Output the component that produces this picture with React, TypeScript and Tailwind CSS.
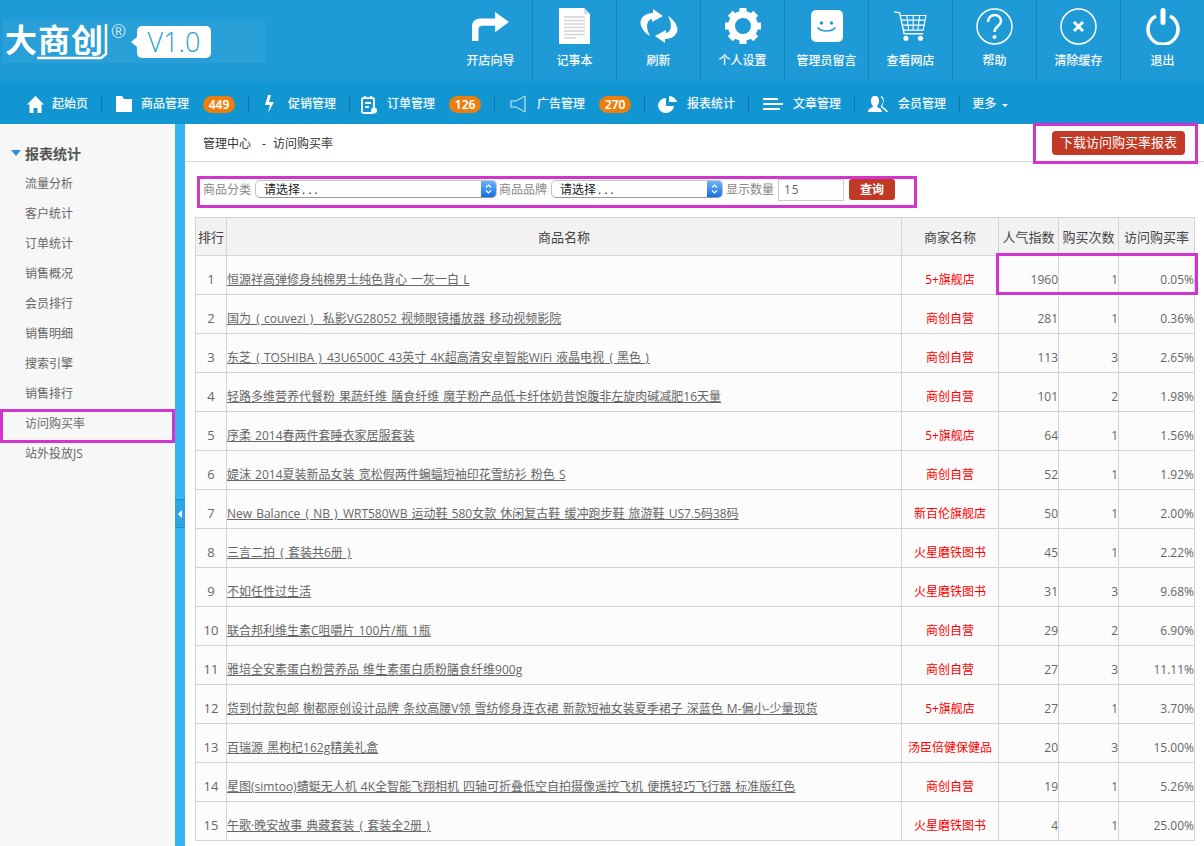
const rows = [
  ['恒源祥高弹修身纯棉男士纯色背心 一灰一白 L', '5+旗舰店', 1960, 1, '0.05%'],
  ['国为 \u200a( couvezi )\u200a \u00a0私影VG28052 视频眼镜播放器 移动视频影院', '商创自营', 281, 1, '0.36%'],
  ['东芝 \u200a( TOSHIBA )\u200a 43U6500C 43英寸 4K超高清安卓智能WiFi 液晶电视 \u200a( 黑色 )\u200a', '商创自营', 113, 3, '2.65%'],
  ['轻路多维营养代餐粉 果蔬纤维 膳食纤维 魔芋粉产品低卡纤体奶昔饱腹非左旋肉碱减肥16天量', '商创自营', 101, 2, '1.98%'],
  ['序柔 2014春两件套睡衣家居服套装', '5+旗舰店', 64, 1, '1.56%'],
  ['媞沫 2014夏装新品女装 宽松假两件蝙蝠短袖印花雪纺衫 粉色 S', '商创自营', 52, 1, '1.92%'],
  ['New Balance \u200a( NB )\u200a WRT580WB 运动鞋 580女款 休闲复古鞋 缓冲跑步鞋 旅游鞋 US7.5码38码', '新百伦旗舰店', 50, 1, '2.00%'],
  ['三言二拍 \u200a( 套装共6册 )\u200a', '火星磨铁图书', 45, 1, '2.22%'],
  ['不如任性过生活', '火星磨铁图书', 31, 3, '9.68%'],
  ['联合邦利维生素C咀嚼片 100片/瓶 1瓶', '商创自营', 29, 2, '6.90%'],
  ['雅培全安素蛋白粉营养品 维生素蛋白质粉膳食纤维900g', '商创自营', 27, 3, '11.11%'],
  ['货到付款包邮 榭都原创设计品牌 条纹高腰V领 雪纺修身连衣裙 新款短袖女装夏季裙子 深蓝色 M-偏小-少量现货', '5+旗舰店', 27, 1, '3.70%'],
  ['百瑞源 黑枸杞162g精美礼盒', '汤臣倍健保健品', 20, 3, '15.00%'],
  ['星图(simtoo)蜻蜓无人机 4K全智能飞翔相机 四轴可折叠低空自拍摄像遥控飞机 便携轻巧飞行器 标准版红色', '商创自营', 19, 1, '5.26%'],
  ['午歌·晚安故事 典藏套装 \u200a( 套装全2册 )\u200a', '火星磨铁图书', 4, 1, '25.00%'],
];

const sideItems = ['流量分析', '客户统计', '订单统计', '销售概况', '会员排行', '销售明细', '搜索引擎', '销售排行', '访问购买率', '站外投放JS'];

const refreshArrow = 'M13 2L23 9L12 15V12C7 13 5 20 10 29C3 25-1 17 1 13C3 8 8 6 13 6Z';

const tiles = [
  {
    label: '开店向导',
    icon: (
      <svg width="37" height="29" viewBox="0 0 40 36" fill="#fff" preserveAspectRatio="none">
        <path d="M0 36V18C0 11 4 8 10 8h15V0l15 12.5L25 25v-8H12c-3 0-5 1-5 5v14z" />
      </svg>
    ),
  },
  {
    label: '记事本',
    icon: (
      <svg width="31" height="36" viewBox="0 0 31 36">
        <path d="M0 0h25l6 6v30H0z" fill="#fff" />
        <path d="M25 0l6 6h-6z" fill="#cfe0ea" />
        <path d="M5 9h21M5 12.5h21M5 16h21M5 19.5h21M5 23h21M5 26.5h21M5 30h12" stroke="#d4d4d4" strokeWidth="1.5" />
      </svg>
    ),
  },
  {
    label: '刷新',
    icon: (
      <svg width="38" height="38" viewBox="0 0 38 38" fill="#fff">
        <path d={refreshArrow} />
        <path d={refreshArrow} transform="rotate(180 19 19)" />
      </svg>
    ),
  },
  {
    label: '个人设置',
    icon: (
      <svg width="36" height="36" viewBox="0 0 36 36" fill="#fff">
        <circle cx="18" cy="18" r="11.5" fill="none" stroke="#fff" strokeWidth="7" />
        {[0, 45, 90, 135, 180, 225, 270, 315].map((a) => (
          <rect key={a} x="14.5" y="0" width="7" height="7" transform={`rotate(${a} 18 18)`} />
        ))}
      </svg>
    ),
  },
  {
    label: '管理员留言',
    icon: (
      <svg width="32" height="32" viewBox="0 0 32 32">
        <rect width="32" height="32" rx="5" fill="#fff" />
        <circle cx="10.5" cy="13" r="1.7" fill="#1e9ad6" />
        <circle cx="20.5" cy="13" r="1.7" fill="#1e9ad6" />
        <path d="M7 18c4 4 13 4 17 0" fill="none" stroke="#1e9ad6" strokeWidth="1.7" strokeLinecap="round" />
      </svg>
    ),
  },
  {
    label: '查看网店',
    icon: (
      <svg width="33" height="30" viewBox="0 0 36 33" fill="none" stroke="#fff">
        <path d="M0 1l6 1 5 23h21" strokeWidth="1.5" />
        <path d="M7 5h28l-3 16H10M14 5l2 16M21 5v16M28 5l-2 16M8 10h26M9 15.5h24" strokeWidth="1.2" />
        <circle cx="13" cy="30" r="2.8" fill="#fff" stroke="none" />
        <circle cx="29" cy="30" r="2.8" fill="#fff" stroke="none" />
      </svg>
    ),
  },
  {
    label: '帮助',
    icon: (
      <svg width="37" height="37" viewBox="0 0 37 37" fill="none" stroke="#fff">
        <circle cx="18.5" cy="18.5" r="17.5" strokeWidth="1.5" />
        <path d="M12 14c0-4 3-7 6.5-7s6.5 2.5 6.5 6c0 5-6.5 5-6.5 11" strokeWidth="2.5" />
        <circle cx="18.5" cy="29" r="2" fill="#fff" stroke="none" />
      </svg>
    ),
  },
  {
    label: '清除缓存',
    icon: (
      <svg width="37" height="37" viewBox="0 0 37 37" fill="none" stroke="#fff">
        <circle cx="18.5" cy="18.5" r="17.5" strokeWidth="1.5" />
        <path d="M14 14l9 9M23 14l-9 9" strokeWidth="3" />
      </svg>
    ),
  },
  {
    label: '退出',
    icon: (
      <svg width="34" height="37" viewBox="0 0 34 37" fill="none" stroke="#fff" strokeWidth="3.5">
        <path d="M10 8a15 15 0 1 0 14 0" />
        <path d="M17 2.5v12" strokeWidth="5" strokeLinecap="round" />
      </svg>
    ),
  },
];

const navItems = [
  {
    label: '起始页',
    cls: 'pl-0',
    box: 'w-[25px]',
    icon: (
      <svg width="17" height="17" viewBox="0 0 17 17" fill="#fff">
        <path d="M8.5 0L17 8.5h-2.5V17h-4v-5h-4v5h-4V8.5H0z" />
      </svg>
    ),
  },
  {
    label: '商品管理',
    badge: 449,
    cls: 'pl-[14px]',
    box: 'w-[25px]',
    icon: (
      <svg width="16" height="16" viewBox="0 0 16 16" fill="#fff">
        <path d="M0 0h6l2 3h8v13H0z" />
      </svg>
    ),
  },
  {
    label: '促销管理',
    cls: 'pl-[14px]',
    box: 'w-[25px]',
    icon: (
      <svg width="13" height="18" viewBox="0 0 13 18" fill="#fff">
        <path d="M5 0h3L6 7h5L5 18l2-8H2z" />
      </svg>
    ),
  },
  {
    label: '订单管理',
    badge: 126,
    cls: 'pl-[11px]',
    box: 'w-[26px]',
    icon: (
      <svg width="16" height="19" viewBox="0 0 16 19" fill="none" stroke="#fff" strokeWidth="1.8">
        <rect x="1" y="3" width="12" height="15" rx="1.5" />
        <path d="M4 1v3M10 1v3M4 8h6M4 12h4" />
        <circle cx="13" cy="15.5" r="3" fill="#fff" stroke="none" />
      </svg>
    ),
  },
  {
    label: '广告管理',
    badge: 270,
    cls: 'pl-[15px]',
    box: 'w-[27px]',
    icon: (
      <svg width="16" height="18" viewBox="0 0 16 18" fill="none" stroke="#d8f0fb" strokeWidth="1">
        <path d="M1 6h5l9-5v16l-9-5H1z" />
      </svg>
    ),
  },
  {
    label: '报表统计',
    cls: 'pl-[12px]',
    box: 'w-[30px]',
    icon: (
      <svg width="20" height="17" viewBox="0 0 20 17" fill="#fff">
        <path d="M9 2a8 7.5 0 1 0 8 8H9z" />
        <path d="M12 0c4 0 7 3 8 6h-8z" />
      </svg>
    ),
  },
  {
    label: '文章管理',
    cls: 'pl-[14px]',
    box: 'w-[30px]',
    icon: (
      <svg width="20" height="12" viewBox="0 0 20 12" fill="#fff">
        <path d="M0 0h15v2H0zM0 5h20v2H0zM0 10h17v2H0z" />
      </svg>
    ),
  },
  {
    label: '会员管理',
    cls: 'pl-[13px]',
    box: 'w-[30px]',
    icon: (
      <svg width="20" height="18" viewBox="0 0 20 18" fill="#fff">
        <path d="M7 1c3 0 4 2 4 5 0 2-1 4-2 5 0 2 5 2 5 6H0c0-4 5-4 5-6-1-1-2-3-2-5 0-3 1-5 4-5z" />
        <path d="M13 1c3 1 3 4 2.5 6-.5 2-1 3-1 4 0 2 4 2 5.5 6h-2c-1-3-5-3-5-6 1-2 2-3 2-5s-1-3-2.5-4c.5-.5 1-1 3-1z" />
      </svg>
    ),
  },
];

function FakeSelect({ className }: { className: string }) {
  return (
    <div className={`${className} h-[18px] flex bg-white rounded-[5px] border border-[#c4c4c4] border-b-[#999] overflow-hidden`}>
      <span className="flex-1 pl-2 text-[12px] leading-[17px] text-[#222]">
        请选择<span className="tracking-[3px] ml-[2px]">...</span>
      </span>
      <span className="w-[15px] flex items-center justify-center bg-gradient-to-b from-[#6cb3fa] to-[#0f6fe8]">
        <svg width="7" height="12" viewBox="0 0 7 12" fill="none" stroke="#fff" strokeWidth="1.2">
          <path d="M1 4.5L3.5 2 6 4.5M1 7.5L3.5 10 6 7.5" />
        </svg>
      </span>
    </div>
  );
}

export default function App() {
  return (
    <div className="font-['Open_Sans','Noto_Sans_CJK_SC',sans-serif] relative w-[1204px] h-[846px] overflow-hidden bg-white text-[12px]">
      <header className="h-[81px] bg-[#1e9ad6] flex justify-between">
        <div className="pt-[19px]">
          <div className="w-[262px] h-[44px] ml-[3px] bg-white/5 flex items-start">
            <div className="relative ml-[2px] w-[103px] h-[44px]">
              <span className="block text-[32px] leading-[42px] font-bold text-white tracking-[1px] whitespace-nowrap">大商创</span>
              <svg className="absolute left-[32px] top-[5px]" width="71" height="36" viewBox="0 0 71 36" fill="none" stroke="#fff" strokeWidth="2.5">
                <path d="M0 34h64l5-4V0" />
              </svg>
            </div>
            <span className="text-[18px] leading-[18px] font-light text-white ml-[3px] mt-[3px]">®</span>
            <div className="relative ml-[11px] mt-[7px] w-[74px] h-[32px] bg-white rounded-[5px] text-center text-[27px] leading-[32px] text-[#2a9fd8] font-light">
              V1.0
              <span className="absolute left-[-6px] top-[11px] w-0 h-0 border-y-[5px] border-y-transparent border-r-[6px] border-r-white" />
            </div>
          </div>
        </div>
        <div className="flex">
          {tiles.map((t, i) => (
            <div key={t.label} className={`w-[84px] h-[80px] flex flex-col items-center border-l ${i > 0 ? 'border-[#1681bd]' : 'border-transparent'}`}>
              <div className="h-[52px] flex items-center justify-center">{t.icon}</div>
              <span className="mt-[1px] leading-[16px] text-white whitespace-nowrap [text-shadow:0_0_1px_rgba(255,255,255,0.5)]">{t.label}</span>
            </div>
          ))}
        </div>
      </header>

      <nav className="h-[43px] bg-[#1296d2] flex items-center pl-[27px] pt-[3px] text-white [text-shadow:0_0_1px_rgba(255,255,255,0.5)]">
        {navItems.map((n) => (
          <div key={n.label} className="flex items-center">
            <div className={`flex items-center pr-[13px] ${n.cls}`}>
              <span className={`${n.box} flex justify-start`}>{n.icon}</span>
              <span className="whitespace-nowrap">{n.label}</span>
              {n.badge && (
                <span className="ml-[14px] w-[32px] h-[17px] rounded-full bg-[#ed7d0c] text-center leading-[17px] font-semibold">{n.badge}</span>
              )}
            </div>
            <span className="w-px h-[14px] bg-[#0d6fa8]" />
          </div>
        ))}
        <div className="flex items-center pl-[12px]">
          <span>更多</span>
          <span className="ml-[6px] mt-[2px] w-0 h-0 border-x-[3px] border-x-transparent border-t-[3px] border-t-white" />
        </div>
      </nav>

      <div className="flex h-[722px]">
        <aside className="w-[175px] bg-[#f7f7f7] pt-[19px]">
          <div className="flex items-center pl-[11px] h-[20px]">
            <span className="w-0 h-0 border-x-[5px] border-x-transparent border-t-[6px] border-t-[#2b8fdc]" />
            <span className="ml-[4px] text-[14px] font-bold text-[#555]">报表统计</span>
          </div>
          <ul className="pt-[6px]">
            {sideItems.map((s) => (
              <li key={s} className="h-[30px] pl-[25px] leading-[30px] text-[#666]">{s}</li>
            ))}
          </ul>
        </aside>
        <div className="w-[10px] bg-[#36b5f2] pt-[375px]">
          <div className="h-[29px] bg-[#2ba6e2] border-y border-[#1e90cc] flex items-center justify-center">
            <span className="w-0 h-0 border-y-[4px] border-y-transparent border-r-[4px] border-r-white" />
          </div>
        </div>
        <main className="flex-1 min-w-0">
          <div className="h-[38px] border-b border-[#d8d8d8] flex items-center justify-between pl-[18px] pr-[19px] text-[#333]">
            <span className="flex pt-[2px]">
              <span>管理中心</span>
              <span className="ml-[11px] mr-[7px]">-</span>
              <span>访问购买率</span>
            </span>
            <button className="w-[133px] h-[24px] mt-[1px] bg-[#c23a26] rounded-[4px] text-white text-[13px]">下载访问购买率报表</button>
          </div>
          <div className="h-[55px] pl-[18px] pt-[17px] flex items-start text-[#888]">
            <span className="w-[52px] leading-[21px]">商品分类</span>
            <div className="mt-[1px]"><FakeSelect className="w-[242px]" /></div>
            <span className="ml-[2px] w-[52px] leading-[21px]">商品品牌</span>
            <div className="mt-[1px]"><FakeSelect className="w-[172px]" /></div>
            <span className="ml-[3px] w-[52px] leading-[21px]">显示数量</span>
            <div className="w-[66px] h-[22px] border border-[#ccc] bg-white pl-[5px] leading-[20px] tracking-[1px] text-[#666]">15</div>
            <button className="ml-[5px] w-[46px] h-[21px] bg-[#c23a26] rounded-[3px] text-white font-semibold">查询</button>
          </div>
          <div className="pl-[10px]">
            <table className="w-[999px] table-fixed border-collapse border border-[#d4d4d4]">
              <colgroup>
                <col className="w-[31px]" />
                <col className="w-[675px]" />
                <col className="w-[97px]" />
                <col className="w-[60px]" />
                <col className="w-[60px]" />
                <col className="w-[76px]" />
              </colgroup>
              <thead>
                <tr className="h-[38px] bg-[#f2f2f2] text-[13px] text-[#444]">
                  {['排行', '商品名称', '商家名称', '人气指数', '购买次数', '访问购买率'].map((h) => (
                    <th key={h} className="border border-[#d4d4d4] font-normal p-0 pt-[3px] text-center whitespace-nowrap">{h}</th>
                  ))}
                </tr>
              </thead>
              <tbody>
                {rows.map((r, i) => (
                  <tr key={i} className="h-[39px] bg-[#fcfcfc] text-[#666]">
                    <td className="border border-[#d4d4d4] p-0 pt-[10px] text-center text-[13px]">{i + 1}</td>
                    <td className="border border-[#d4d4d4] p-0 pt-[10px] whitespace-nowrap [word-spacing:1px]"><a className="underline">{r[0]}</a></td>
                    <td className="border border-[#d4d4d4] p-0 pt-[10px] text-center text-[#f00] whitespace-nowrap">{r[1]}</td>
                    <td className="border border-[#d4d4d4] p-0 pt-[10px] text-right">{r[2]}</td>
                    <td className="border border-[#d4d4d4] p-0 pt-[10px] text-right">{r[3]}</td>
                    <td className="border border-[#d4d4d4] p-0 pt-[10px] text-right">{r[4]}</td>
                  </tr>
                ))}
              </tbody>
            </table>
          </div>
        </main>
      </div>

      <div className="absolute left-[1033px] top-[123px] w-[165px] h-[41px] border-[3px] border-[#d035d0]" />
      <div className="absolute left-[197px] top-[176px] w-[720px] h-[32px] border-[3px] border-[#d035d0]" />
      <div className="absolute left-[996px] top-[253px] w-[202px] h-[42px] border-[3px] border-[#d035d0]" />
      <div className="absolute left-0 top-[409px] w-[175px] h-[34px] border-[3px] border-[#d035d0]" />
    </div>
  );
}
